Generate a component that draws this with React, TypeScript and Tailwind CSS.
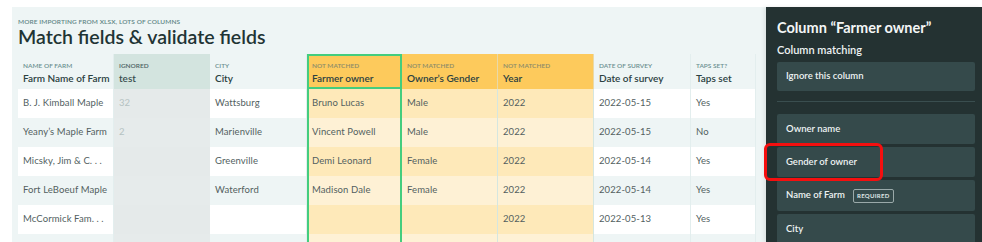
import React from "react";

type Col = {
  label: string;
  name: string;
  w: string;
  kind: "normal" | "ignored" | "nm" | "sel";
};

const cols: Col[] = [
  { label: "NAME OF FARM", name: "Farm Name of Farm", w: "w-[96px]", kind: "normal" },
  { label: "IGNORED", name: "test", w: "w-[96px]", kind: "ignored" },
  { label: "CITY", name: "City", w: "w-[97px]", kind: "normal" },
  { label: "NOT MATCHED", name: "Farmer owner", w: "w-[95px]", kind: "sel" },
  { label: "NOT MATCHED", name: "Owner’s Gender", w: "w-[96px]", kind: "nm" },
  { label: "NOT MATCHED", name: "Year", w: "w-[96px]", kind: "nm" },
  { label: "DATE OF SURVEY", name: "Date of survey", w: "w-[97px]", kind: "normal" },
  { label: "TAPS SET?", name: "Taps set", w: "w-[65px]", kind: "normal" },
];

const rows: string[][] = [
  ["B. J. Kimball Maple", "32", "Wattsburg", "Bruno Lucas", "Male", "2022", "2022-05-15", "Yes"],
  ["Yeany’s Maple Farm", "2", "Marienville", "Vincent Powell", "Male", "2022", "2022-05-15", "No"],
  ["Micsky, Jim & C. . .", "", "Greenville", "Demi Leonard", "Female", "2022", "2022-05-14", "Yes"],
  ["Fort LeBoeuf Maple", "", "Waterford", "Madison Dale", "Female", "2022", "2022-05-14", "Yes"],
  ["McCormick Fam. . .", "", "", "", "", "2022", "2022-05-13", "Yes"],
  ["", "", "", "", "", "", "", ""],
];

function headerClass(c: Col) {
  switch (c.kind) {
    case "ignored":
      return "bg-[#d3e4df]";
    case "nm":
      return "bg-[#fdca5c] border-r border-[#e9d9a8]";
    case "sel":
      return "bg-[#fdca5c] border-2 border-[#44cd7e]";
    default:
      return "bg-[#eef5f5] border-r border-[#e3eeee]";
  }
}

function cellClass(c: Col, odd: boolean) {
  switch (c.kind) {
    case "ignored":
      return odd ? "bg-[#e5eaea] text-[#b5c2c2]" : "bg-[#e6ebeb] text-[#b5c2c2]";
    case "nm":
      return (odd ? "bg-[#fee9b9]" : "bg-[#fef1d5]") + " border-r border-[#d5e6e0] text-[#535f5f]";
    case "sel":
      return (odd ? "bg-[#fee9b9]" : "bg-[#fef1d5]") + " border-x-2 border-[#44cd7e] text-[#535f5f]";
    default:
      return (odd ? "bg-white" : "bg-[#eef5f5]") + " border-r border-[#e3eeee] text-[#535f5f]";
  }
}

function Box({ children, h = "h-[30px]" }: { children: React.ReactNode; h?: string }) {
  return (
    <div className={`${h} bg-[#354a4b] rounded-[2px] flex items-center pl-[9px] text-[9.5px] font-semibold text-[#eef3f3]`}>
      {children}
    </div>
  );
}

export default function App() {
  return (
    <div
      className="relative w-[982px] h-[242px] overflow-hidden bg-white pt-[7px] pl-[12px] flex"
      style={{ fontFamily: "Lato, 'Noto Sans', sans-serif" }}
    >
      <main className="w-[754px] h-[235px] bg-[#eef5f5] pl-[6px] pt-[10px] overflow-hidden">
        <div className="text-[6.5px] leading-[10px] font-semibold text-[#5f8585] tracking-[0.1px]">
          MORE IMPORTING FROM XLSX, LOTS OF COLUMNS
        </div>
        <h1 className="text-[19.5px] leading-[20px] font-semibold text-[#1f3434]">
          Match fields &amp; validate fields
        </h1>
        <div className="mt-[7px]">
          <div className="flex h-[35px]">
            {cols.map((c, i) => (
              <div key={i} className={`${c.w} shrink-0 ${headerClass(c)} px-[5px] pt-[7px] box-border`}>
                <div
                  className={`text-[6.5px] leading-[10px] font-semibold ${
                    c.kind === "ignored" ? "text-[#4c6262]" : c.kind === "normal" ? "text-[#6b9090]" : "text-[#8b8a6a]"
                  } ${c.kind === "sel" ? "-mt-[2px] -ml-[2px]" : ""}`}
                >
                  {c.label}
                </div>
                <div
                  className={`text-[10px] leading-[14px] font-semibold whitespace-nowrap ${
                    c.kind === "ignored" ? "text-[#3b5050]" : "text-[#2b4141]"
                  } ${c.kind === "sel" ? "-ml-[2px]" : ""}`}
                >
                  {c.name}
                </div>
              </div>
            ))}
          </div>
          {rows.map((r, ri) => (
            <div key={ri} className="flex h-[29px]">
              {cols.map((c, ci) => (
                <div
                  key={ci}
                  className={`${c.w} shrink-0 ${cellClass(c, ri % 2 === 0)} flex items-center ${
                    c.kind === "sel" ? "pl-[3px]" : "pl-[5px]"
                  } text-[9.5px] whitespace-nowrap overflow-hidden tracking-[0.1px]`}
                >
                  {r[ci]}
                </div>
              ))}
            </div>
          ))}
        </div>
      </main>
      <aside className="w-[216px] h-[235px] bg-[#243232] pl-[11px] pr-[7px] pt-[11px] shadow-[-2px_0_4px_rgba(0,0,0,0.08)]">
        <div className="text-[14.5px] leading-[20px] font-bold text-[#f3f6f6] whitespace-nowrap">
          Column “Farmer owner”
        </div>
        <div className="mt-[5px] text-[11px] leading-[14px] font-semibold text-[#eef3f3]">Column matching</div>
        <div className="mt-[5px]">
          <Box h="h-[29px]">Ignore this column</Box>
        </div>
        <div className="mt-[10px] h-px bg-[#3a4e4f]" />
        <div className="mt-[12px] flex flex-col gap-[3px]">
          <Box>Owner name</Box>
          <Box>Gender of owner</Box>
          <Box h="h-[31px]">
            Name of Farm
            <span className="ml-[8px] border border-[#9aa9a9] rounded-[2px] px-[3px] text-[6px] leading-[12px] font-bold tracking-[0.3px] text-[#dfe6e6]">
              REQUIRED
            </span>
          </Box>
          <Box>City</Box>
        </div>
      </aside>
      <div className="absolute left-[764px] top-[143px] w-[119px] h-[38px] border-[3px] border-[#f50f0f] rounded-[6px]" />
    </div>
  );
}
